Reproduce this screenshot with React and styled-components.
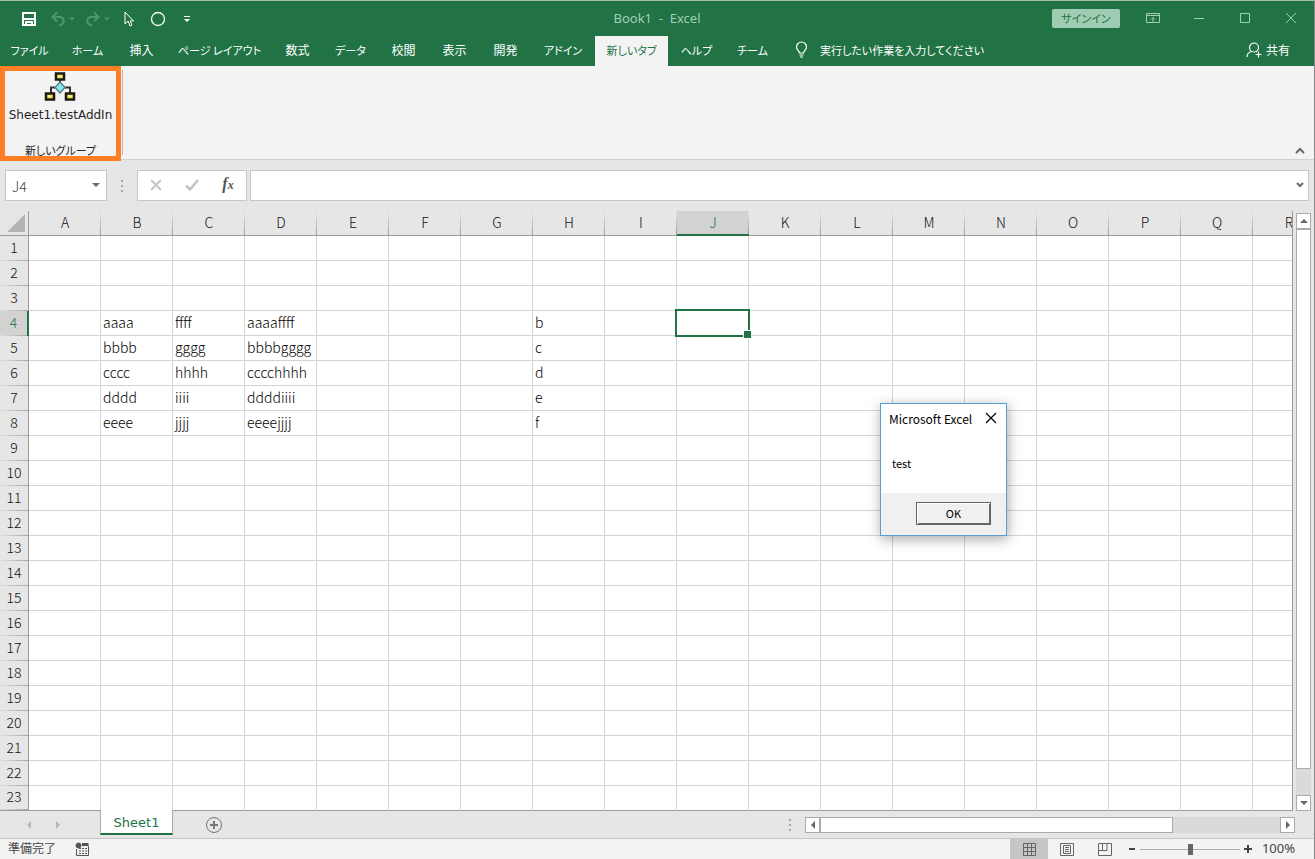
import React, { useState } from 'react'
import styled, { createGlobalStyle, css } from 'styled-components'

const GREEN = '#217346'
const JP = "'Noto Sans', 'Noto Sans CJK JP', sans-serif"

const GlobalStyle = createGlobalStyle`
  * {
    box-sizing: border-box;
  }
  body {
    margin: 0;
    background: #e6e6e6;
    font-family: ${JP};
    font-size: 12px;
    color: #262626;
  }
  button, input {
    font: inherit;
    color: inherit;
    margin: 0;
    padding: 0;
    border: 0;
    background: none;
    border-radius: 0;
    outline: none;
  }
  svg {
    display: block;
    flex: none;
  }
`

const Window = styled.div`
  position: relative;
  display: flex;
  flex-direction: column;
  min-height: 100vh;
  border-top: 1px solid #a9bdb1;
  border-right: 1px solid #8a8a8a;
  overflow: hidden;
`

/* title bar */

const TitleBar = styled.header`
  display: grid;
  grid-template-columns: 1fr auto 1fr;
  align-items: center;
  height: 35px;
  padding-bottom: 2px;
  background: ${GREEN};
  color: #9fd0b3;
`

const QuickAccess = styled.div`
  display: flex;
  padding: 2px 0 0 14px;
`

const QuickButton = styled.button`
  display: flex;
  align-items: center;
  justify-content: center;
  gap: 3px;
  width: ${(p) => p.$width || 29}px;
  height: 32px;
  color: ${(p) => (p.$dim ? '#4f9570' : '#fff')};
`

const Title = styled.h1`
  margin: 0;
  font-size: 13px;
  font-weight: 400;
  white-space: pre;
`

const WindowControls = styled.div`
  display: flex;
  align-items: center;
  justify-content: flex-end;
`

const SignIn = styled.button`
  width: 68px;
  height: 19px;
  margin-right: 10px;
  border-radius: 2px;
  background: #9fcdb3;
  color: ${GREEN};
  font-family: 'Noto Sans CJK JP', sans-serif;
  font-feature-settings: 'palt';
  font-size: 11px;
  line-height: 18px;
`

const ControlButton = styled.button`
  display: flex;
  align-items: center;
  justify-content: center;
  width: 46px;
  height: 32px;
`

/* ribbon */

const Tabs = styled.nav`
  display: flex;
  height: 30px;
  background: ${GREEN};
  color: #fff;
  font-family: 'Noto Sans CJK JP', sans-serif;
  font-feature-settings: 'palt';
  font-size: 11px;
`

const Tab = styled.button`
  width: ${(p) => p.$width}px;
  flex: none;
  padding-bottom: 3px;
  white-space: nowrap;
  font-size: ${(p) => (p.$kanji ? 12 : 11)}px;
  ${(p) =>
    p.$active &&
    css`
      background: #f3f3f3;
      color: ${GREEN};
    `}
`

const TellMe = styled.button`
  display: flex;
  align-items: center;
  gap: 12px;
  padding: 0 15px 3px;
  white-space: nowrap;
`

const Share = styled.button`
  display: flex;
  align-items: center;
  gap: 4px;
  margin-left: auto;
  padding: 0 24px 3px;
  font-size: 12px;
  white-space: nowrap;
`

const Ribbon = styled.section`
  display: flex;
  justify-content: space-between;
  height: 94px;
  background: #f3f3f3;
  border-bottom: 1px solid #d2d2d2;
`

const Group = styled.div`
  position: relative;
  display: flex;
  flex-direction: column;
  align-items: center;
  justify-content: space-between;
  width: 123px;
  padding: 5px 2px 0 0;

  &::before {
    content: '';
    position: absolute;
    inset: 4px 0 4px auto;
    border-right: 1px solid #bdb7b0;
  }
  &::after {
    content: '';
    position: absolute;
    inset: 0 2px -2px 0;
    border: 5px solid #ff7f27;
    pointer-events: none;
  }
`

const MacroButton = styled.button`
  display: flex;
  flex-direction: column;
  align-items: center;
  gap: 4px;
  font-family: 'DejaVu Sans', sans-serif;
  line-height: 16px;
`

const GroupName = styled.span`
  font-family: 'Noto Sans CJK JP', sans-serif;
  font-feature-settings: 'palt';
  font-size: 11px;
  line-height: 18px;
`

const Collapse = styled.button`
  align-self: flex-end;
  padding: 4px 9px;
`

/* formula bar */

const FormulaBar = styled.section`
  display: flex;
  align-items: center;
  height: 51px;
  padding: 0 5px;
`

const Box = styled.div`
  display: flex;
  align-items: center;
  height: 31px;
  padding-bottom: 2px;
  background: #fff;
  border: 1px solid #c6c6c6;
  color: #6a6a6a;
`

const NameBox = styled(Box)`
  width: 102px;

  input {
    flex: 1;
    min-width: 0;
    padding: 3px 0 0 6px;
    font-family: 'Noto Sans CJK JP', sans-serif;
    font-weight: 300;
    font-size: 14px;
    line-height: 20px;
    color: #444;
  }
  button {
    padding: 6px;
  }
`

const Dots = styled.span`
  display: grid;
  gap: 3px;
  width: 2px;
  margin: 0 14px;

  i {
    width: 2px;
    height: 2px;
    background: #a6a6a6;
  }
`

const FxBox = styled(Box)`
  width: 110px;
  margin-right: 3px;

  button {
    display: flex;
    flex: 1;
    justify-content: center;
  }
`

const FxLabel = styled.span`
  font: italic bold 16px/20px 'Liberation Serif', serif;
  color: #555;

  small {
    font-size: 12px;
  }
`

const FormulaBox = styled(Box)`
  flex: 1;

  input {
    flex: 1;
    padding: 0 6px;
  }
  button {
    padding: 4px;
  }
`

/* grid */

const Work = styled.main`
  display: flex;
`

const GridClip = styled.div`
  flex: 1;
  min-width: 0;
  overflow: hidden;
  border-right: 1px solid #9b9b9b;
`

const Sheet = styled.table`
  table-layout: fixed;
  width: ${(p) => 29 + p.$columns * 72}px;
  border-collapse: separate;
  border-spacing: 0;
  font-family: 'Noto Sans CJK JP', sans-serif;
  font-size: 14px;
  font-weight: 300;
  line-height: 20px;
  color: #000;

  tbody tr:last-child > * {
    border-bottom: 1px solid #9b9b9b;
  }
`

const headFace = css`
  height: 25px;
  text-align: center;
  font-weight: 300;
  color: ${(p) => (p.$active ? GREEN : '#111')};
`

const Corner = styled.td`
  width: 29px;
  height: 25px;
  padding: 0 3px 3px 0;
  vertical-align: bottom;
  border-right: 1px solid #9b9b9b;
  border-bottom: 1px solid #9b9b9b;

  svg {
    margin-left: auto;
  }
`

const ColumnHead = styled.th`
  ${headFace}
  width: 72px;
  padding: 0 0 2px;
  border-bottom: ${(p) => (p.$active ? `2px solid ${GREEN}` : '1px solid #9b9b9b')};
  background:
    linear-gradient(#e6e6e6, #9b9b9b) right / 1px 100% no-repeat,
    ${(p) => (p.$active ? '#d2d2d2' : '#e6e6e6')};
`

const RowHead = styled.th`
  ${headFace}
  padding: 0 0 4px;
  border-right: ${(p) => (p.$active ? `2px solid ${GREEN}` : '1px solid #9b9b9b')};
  background:
    linear-gradient(to right, #e0e0e0, #a6a6a6) bottom / 100% 1px no-repeat,
    ${(p) => (p.$active ? '#d2d2d2' : '#e6e6e6')};
`

const Cell = styled.td`
  position: relative;
  height: 25px;
  padding: 0 0 2px 2px;
  background: #fff;
  border-right: 1px solid #d4d4d4;
  border-bottom: 1px solid #d4d4d4;
  white-space: nowrap;
  ${(p) =>
    p.$selected &&
    css`
      z-index: 1;
      &::before {
        content: '';
        position: absolute;
        inset: -2px;
        border: 2px solid ${GREEN};
      }
      &::after {
        content: '';
        position: absolute;
        right: -4px;
        bottom: -4px;
        width: 7px;
        height: 7px;
        background: ${GREEN};
        border: 1px solid #fff;
      }
    `}
`

/* scroll bars */

const Track = styled.div`
  display: flex;
  background: #dadada;
  color: #666;
  ${(p) =>
    p.$vertical
      ? css`
          flex-direction: column;
          width: 15px;
          margin: 2px 3px 0;
        `
      : css`
          width: 490px;
          height: 16px;
          margin-right: 19px;
        `}
`

const TrackButton = styled.button`
  display: flex;
  flex: none;
  align-items: center;
  justify-content: center;
  width: 15px;
  height: 16px;
  background: #fff;
  border: 1px solid #ababab;
`

const Thumb = styled.div`
  flex: ${(p) => p.$size};
  background: #fff;
  border: 1px solid #ababab;
`

const Rest = styled.div`
  flex: ${(p) => p.$size};
`

/* sheet tabs and status */

const SheetBar = styled.div`
  display: flex;
  align-items: center;
  height: 27px;
`

const SheetNav = styled.div`
  display: flex;
  align-items: center;
  justify-content: center;
  width: 100px;
  padding-right: 14px;
  gap: 21px;
  color: #b5b5b5;
`

const SheetTab = styled.button`
  align-self: flex-start;
  z-index: 1;
  width: 73px;
  height: 25px;
  margin-top: -1px;
  background: #fff;
  color: ${GREEN};
  border: 1px solid #ababab;
  border-width: 0 1px;
  border-bottom: 2px solid ${GREEN};
  padding-top: 2px;
  font-family: 'DejaVu Sans', sans-serif;
  font-size: 13px;
`

const SheetSpace = styled.div`
  display: flex;
  flex: 1;
  align-items: center;
  justify-content: space-between;
  padding-left: 32px;
`

const StatusBar = styled.footer`
  display: flex;
  align-items: center;
  height: 21px;
  padding: 0 19px 0 8px;
  background: #f3f3f3;
  border-top: 1px solid #c6c6c6;
  color: #444;
`

const StatusText = styled.span`
  margin-right: 19px;
  padding-bottom: 2px;
  font-family: 'Noto Sans CJK JP', sans-serif;
  line-height: 18px;
`

const ViewButton = styled.button`
  display: flex;
  align-items: center;
  justify-content: center;
  width: 38px;
  height: 20px;
  background: ${(p) => (p.$active ? '#c6c6c6' : 'transparent')};
  color: #666;
`

const Spacer = styled.div`
  flex: 1;
`

const ZoomButton = styled.button`
  display: flex;
  align-items: center;
  justify-content: center;
  width: 16px;
  height: 20px;
`

const ZoomRange = styled.input`
  appearance: none;
  width: 100px;
  height: 20px;
  background: linear-gradient(#b0b0b0, #b0b0b0) center / 100% 1px no-repeat;

  &::-webkit-slider-thumb {
    appearance: none;
    width: 5px;
    height: 11px;
    background: #666;
  }
`

const ZoomLevel = styled.output`
  width: 39px;
  padding-bottom: 2px;
  text-align: right;
  font-size: 13px;
  line-height: 18px;
`

/* message box */

const MessageBox = styled.div`
  position: absolute;
  left: 880px;
  top: 402px;
  z-index: 2;
  display: flex;
  flex-direction: column;
  width: 127px;
  height: 133px;
  background: #fff;
  border: 1px solid #5a9fd4;
  box-shadow: 1px 3px 12px rgba(0, 0, 0, 0.35);
  font-family: 'Noto Sans CJK JP', sans-serif;
  color: #000;
`

const MessageTitle = styled.div`
  display: flex;
  align-items: center;
  justify-content: space-between;
  height: 28px;
  padding: 0 9px 0 8px;
  white-space: nowrap;
`

const MessageText = styled.p`
  flex: 1;
  margin: 0;
  padding: 23px 11px 0;
  font-size: 11px;
  line-height: 16px;
`

const MessageFoot = styled.div`
  display: flex;
  align-items: center;
  justify-content: flex-end;
  height: 42px;
  padding: 0 15px 2px 0;
  background: #f0f0f0;
`

const OkButton = styled.button`
  width: 75px;
  height: 23px;
  padding-bottom: 1px;
  border: 1px solid #646464;
  box-shadow: inset 1px 1px #fff, inset -1px -1px #696969;
  background: #f0f0f0;
  font-size: 11px;
`

const Arrow = ({ dir = 'down', size = 6 }) => {
  const paths = {
    down: 'M0 2h8L4 6z',
    up: 'M0 6h8L4 2z',
    left: 'M6 0v8L2 4z',
    right: 'M2 0v8l4-4z',
  }
  return (
    <svg width={size} height={size} viewBox="0 0 8 8" fill="currentColor">
      <path d={paths[dir]} />
    </svg>
  )
}

const Stroke = ({ w = 16, h = 16, width = 1, children, ...rest }) => (
  <svg width={w} height={h} viewBox={`0 0 ${w} ${h}`} fill="none" stroke="currentColor" strokeWidth={width} {...rest}>
    {children}
  </svg>
)

const UndoIcon = () => (
  <Stroke width={2}>
    <path d="M7 1.500 2.500 6 7 10.500M3 6h7.500a4 4 0 0 1 1 7.500L9 14.500" />
  </Stroke>
)

const RedoIcon = () => (
  <Stroke width={2}>
    <path d="M9 1.500 13.500 6 9 10.500M13 6H5.500a4 4 0 0 0-1 7.500L7 14.500" />
  </Stroke>
)

const FlowIcon = () => (
  <svg width="32" height="32" viewBox="0 0 32 32">
    <path d="M16 9v4M11 16.500H7V22M21 16.500h5V22" fill="none" stroke="#333" strokeWidth="2" />
    <path d="m16 11 5 5.500-5 5.500-5-5.500z" fill="#7fe8f5" stroke="#5b7f88" strokeWidth="1.5" />
    <g fill="#f5ea6c" stroke="#1c1a10" strokeWidth="2.500">
      <path d="M12 2.500h8v6h-8zM2 22.500h8v6H2zM22 22.500h8v6h-8z" />
    </g>
  </svg>
)

const tabs = [
  { name: 'ファイル', width: 59 },
  { name: 'ホーム', width: 57 },
  { name: '挿入', width: 51, kanji: true },
  { name: 'ページ レイアウト', width: 105 },
  { name: '数式', width: 51, kanji: true },
  { name: 'データ', width: 55 },
  { name: '校閲', width: 51, kanji: true },
  { name: '表示', width: 51, kanji: true },
  { name: '開発', width: 51, kanji: true },
  { name: 'アドイン', width: 64 },
  { name: '新しいタブ', width: 73 },
  { name: 'ヘルプ', width: 57 },
  { name: 'チーム', width: 55 },
]

const columns = 'ABCDEFGHIJKLMNOPQR'.split('')
const rows = Array.from({ length: 23 }, (_, i) => i + 1)

const data = {
  4: { B: 'aaaa', C: 'ffff', D: 'aaaaffff', H: 'b' },
  5: { B: 'bbbb', C: 'gggg', D: 'bbbbgggg', H: 'c' },
  6: { B: 'cccc', C: 'hhhh', D: 'cccchhhh', H: 'd' },
  7: { B: 'dddd', C: 'iiii', D: 'ddddiiii', H: 'e' },
  8: { B: 'eeee', C: 'jjjj', D: 'eeeejjjj', H: 'f' },
}

const Grid = () => (
  <Sheet $columns={columns.length}>
    <thead>
      <tr>
        <Corner>
          <svg width="18" height="18" viewBox="0 0 18 18">
            <path d="M18 0v18H0z" fill="#b4b4b4" />
          </svg>
        </Corner>
        {columns.map((c) => (
          <ColumnHead key={c} scope="col" $active={c === 'J'}>
            {c}
          </ColumnHead>
        ))}
      </tr>
    </thead>
    <tbody>
      {rows.map((r) => (
        <tr key={r}>
          <RowHead scope="row" $active={r === 4}>
            {r}
          </RowHead>
          {columns.map((c) => (
            <Cell key={c} $selected={c === 'J' && r === 4}>
              {data[r] && data[r][c]}
            </Cell>
          ))}
        </tr>
      ))}
    </tbody>
  </Sheet>
)

const Splitter = () => (
  <Dots>
    <i />
    <i />
    <i />
  </Dots>
)

export default function App() {
  const [active, setActive] = useState('新しいタブ')
  const [zoom, setZoom] = useState(100)

  return (
    <Window>
      <GlobalStyle />
      <TitleBar>
        <QuickAccess>
          <QuickButton $width={30} aria-label="上書き保存">
            <Stroke w={14} h={14} width={2}>
              <path d="M1 1h12v12H1zM2 7h10" />
              <path d="M4 13v-3h6v3" />
            </Stroke>
          </QuickButton>
          <QuickButton $width={36} $dim aria-label="元に戻す">
            <UndoIcon />
            <Arrow />
          </QuickButton>
          <QuickButton $width={34} $dim aria-label="やり直し">
            <RedoIcon />
            <Arrow />
          </QuickButton>
          <QuickButton aria-label="選択">
            <Stroke w={10} h={16}>
              <path d="M1 1v12l3-3 2 5 2-1-2-4h3.500z" />
            </Stroke>
          </QuickButton>
          <QuickButton aria-label="楕円">
            <Stroke width={1.3}>
              <circle cx="8" cy="8" r="6.500" />
            </Stroke>
          </QuickButton>
          <QuickButton aria-label="カスタマイズ">
            <svg width="6" height="8" viewBox="0 0 6 8" fill="currentColor">
              <path d="M0 1h6v1H0zM0 4h6L3 7z" />
            </svg>
          </QuickButton>
        </QuickAccess>
        <Title>{'Book1  -  Excel'}</Title>
        <WindowControls>
          <SignIn>サインイン</SignIn>
          <ControlButton aria-label="リボンの表示オプション">
            <Stroke w={14} h={12}>
              <path d="M.5 1.500h13v9H.5zM1 3.500h12M7 10V5.500M5 7.500l2-2 2 2" />
            </Stroke>
          </ControlButton>
          <ControlButton aria-label="最小化">
            <Stroke w={10} h={10}>
              <path d="M0 5.500h10" />
            </Stroke>
          </ControlButton>
          <ControlButton aria-label="最大化">
            <Stroke w={10} h={10}>
              <path d="M.5.5h9v9h-9z" />
            </Stroke>
          </ControlButton>
          <ControlButton aria-label="閉じる">
            <Stroke w={10} h={10}>
              <path d="m0 0 10 10M10 0 0 10" />
            </Stroke>
          </ControlButton>
        </WindowControls>
      </TitleBar>

      <Tabs>
        {tabs.map((tab) => (
          <Tab
            key={tab.name}
            $width={tab.width}
            $kanji={tab.kanji}
            $active={tab.name === active}
            onClick={() => setActive(tab.name)}
          >
            {tab.name}
          </Tab>
        ))}
        <TellMe>
          <Stroke w={13} h={17} width={1.2}>
            <path d="M4.500 12c0-2-3-3-3-6a5 5 0 0 1 10 0c0 3-3 4-3 6zM4.500 14h4M5 16h3" />
          </Stroke>
          実行したい作業を入力してください
        </TellMe>
        <Share>
          <Stroke w={16} h={16} width={1.2}>
            <circle cx="8" cy="5.500" r="4.500" />
            <path d="M1 15c0-3 2-5 5-5.500M10 9.500l1 .5M12.500 9.500v6M9.500 12.500h6" />
          </Stroke>
          共有
        </Share>
      </Tabs>

      <Ribbon>
        <Group>
          <MacroButton>
            <FlowIcon />
            Sheet1.testAddIn
          </MacroButton>
          <GroupName>新しいグループ</GroupName>
        </Group>
        <Collapse aria-label="リボンを折りたたむ">
          <Stroke w={10} h={8} width={2} color="#666">
            <path d="m1 6 4-4 4 4" />
          </Stroke>
        </Collapse>
      </Ribbon>

      <FormulaBar>
        <NameBox>
          <input aria-label="名前ボックス" defaultValue="J4" />
          <button aria-label="名前の一覧">
            <Arrow size={8} />
          </button>
        </NameBox>
        <Splitter />
        <FxBox>
          <button aria-label="キャンセル">
            <Stroke w={12} h={12} width={2} color="#c4c4c4">
              <path d="m1 1 10 10M11 1 1 11" />
            </Stroke>
          </button>
          <button aria-label="入力">
            <Stroke w={14} h={12} width={2.5} color="#c4c4c4">
              <path d="m1 6.500 4 4L13 1" />
            </Stroke>
          </button>
          <button aria-label="関数の挿入">
            <FxLabel>
              f<small>x</small>
            </FxLabel>
          </button>
        </FxBox>
        <FormulaBox>
          <input aria-label="数式バー" />
          <button aria-label="数式バーの展開">
            <Stroke w={8} h={8} width={2}>
              <path d="m1 2 3 3 3-3" />
            </Stroke>
          </button>
        </FormulaBox>
      </FormulaBar>

      <Work>
        <GridClip>
          <Grid />
        </GridClip>
        <Track $vertical>
          <TrackButton aria-label="上へ">
            <Arrow dir="up" size={8} />
          </TrackButton>
          <Thumb $size={541} />
          <Rest $size={26} />
          <TrackButton aria-label="下へ">
            <Arrow size={8} />
          </TrackButton>
        </Track>
      </Work>

      <SheetBar>
        <SheetNav>
          <Arrow dir="left" size={8} />
          <Arrow dir="right" size={8} />
        </SheetNav>
        <SheetTab>Sheet1</SheetTab>
        <SheetSpace>
          <button aria-label="新しいシート">
            <Stroke w={18} h={18} color="#777">
              <circle cx="9" cy="9" r="7.500" />
              <path d="M9 5v8M5 9h8" strokeWidth="2" />
            </Stroke>
          </button>
          <Spacer />
          <Splitter />
          <Track>
            <TrackButton aria-label="左へ">
              <Arrow dir="left" size={8} />
            </TrackButton>
            <Thumb $size={353} />
            <Rest $size={107} />
            <TrackButton aria-label="右へ">
              <Arrow dir="right" size={8} />
            </TrackButton>
          </Track>
        </SheetSpace>
      </SheetBar>

      <StatusBar>
        <StatusText>準備完了</StatusText>
        <Stroke w={14} h={14} color="#555">
          <circle cx="3.500" cy="3.500" r="2.500" fill="currentColor" />
          <path d="M7 2.500h6.500" strokeWidth="3" />
          <path d="M1.500 7v6.500h12V4M4 6.500h2M7 6.500h2M10 6.500h2M4 9h2M7 9h2M10 9h2M4 11.500h2M7 11.500h2M10 11.500h2" />
        </Stroke>
        <Spacer />
        <ViewButton $active aria-label="標準">
          <Stroke w={13} h={13}>
            <path d="M.5.5h12v12H.5zM4.500 0v13M8.500 0v13M0 4.500h13M0 8.500h13" />
          </Stroke>
        </ViewButton>
        <ViewButton aria-label="ページ レイアウト表示">
          <Stroke w={14} h={13}>
            <path d="M.5.5h13v12H.5zM3.500 2.500h7v8h-7zM5 4.500h4M5 6.500h4M5 8.500h4" />
          </Stroke>
        </ViewButton>
        <ViewButton aria-label="改ページ プレビュー">
          <Stroke w={14} h={13}>
            <path d="M.5.5h13v12H.5zM.5 7.500h8.500V.5M4.500.5v7" />
          </Stroke>
        </ViewButton>
        <ZoomButton aria-label="縮小" onClick={() => setZoom(Math.max(10, zoom - 10))}>
          <Stroke w={8} h={8} width={2}>
            <path d="M1 4h6" />
          </Stroke>
        </ZoomButton>
        <ZoomRange
          type="range"
          min="0"
          max="200"
          value={zoom}
          aria-label="ズーム"
          onChange={(e) => setZoom(Number(e.target.value))}
        />
        <ZoomButton aria-label="拡大" onClick={() => setZoom(Math.min(200, zoom + 10))}>
          <Stroke w={8} h={8} width={2}>
            <path d="M0 4h8M4 0v8" />
          </Stroke>
        </ZoomButton>
        <ZoomLevel>{zoom}%</ZoomLevel>
      </StatusBar>

      <MessageBox role="dialog" aria-label="Microsoft Excel">
        <MessageTitle>
          Microsoft Excel
          <button aria-label="閉じる">
            <Stroke w={12} h={12} width={1.2}>
              <path d="m1 1 10 10M11 1 1 11" />
            </Stroke>
          </button>
        </MessageTitle>
        <MessageText>test</MessageText>
        <MessageFoot>
          <OkButton>OK</OkButton>
        </MessageFoot>
      </MessageBox>
    </Window>
  )
}
